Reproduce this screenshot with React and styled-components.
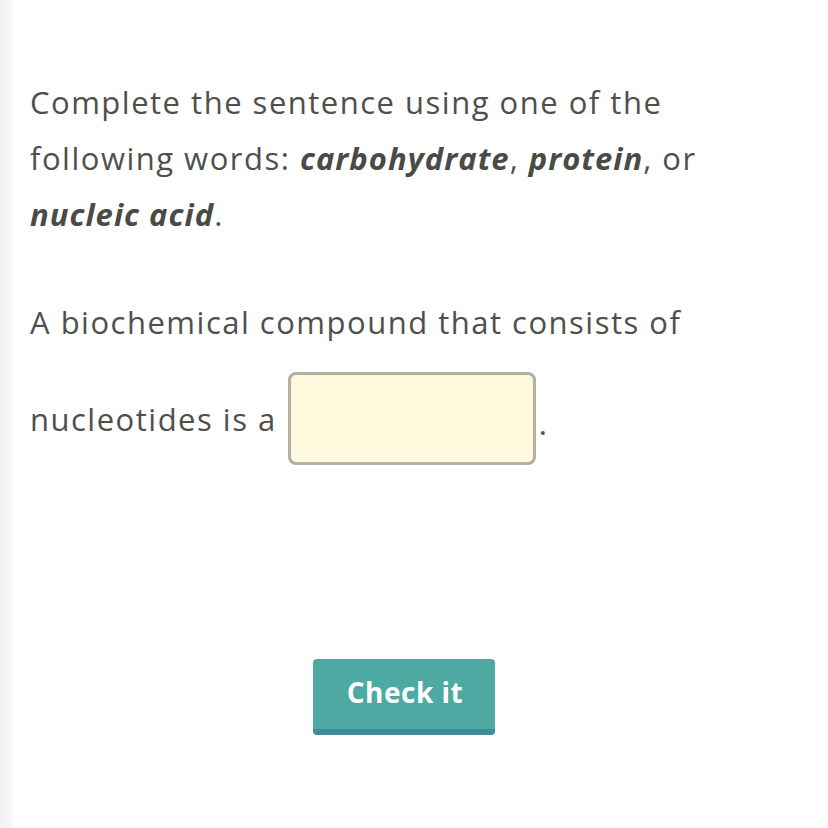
import React from 'react'
import styled, { createGlobalStyle } from 'styled-components'

const GlobalStyle = createGlobalStyle`
  html, body {
    margin: 0;
    padding: 0;
    background: #ffffff;
  }
`

const Page = styled.div`
  width: 828px;
  height: 828px;
  box-sizing: border-box;
  display: flex;
  flex-direction: column;
  background: linear-gradient(to right, #f1f1f1 0px, #f7f7f7 10px, #ffffff 16px);
  padding: 74px 20px 0 30px;
  font-family: 'Open Sans', Lato, sans-serif;
  color: #4f4f4d;
`

const Prompt = styled.p`
  margin: 0;
  font-size: 31px;
  line-height: 56px;
  letter-spacing: 1.5px;
  width: 720px;
`

const Term = styled.b`
  font-style: italic;
  font-weight: 700;
  color: #4a4a47;
  letter-spacing: 1px;
`

const Sentence = styled.div`
  margin-top: 52px;
  font-size: 31px;
  line-height: 56px;
  letter-spacing: 1.5px;
  width: 720px;
`

const BlankRow = styled.div`
  display: flex;
  align-items: center;
  margin-top: 22px;
`

const Blank = styled.input`
  width: 248px;
  height: 93px;
  box-sizing: border-box;
  margin: 0 3px 0 11px;
  background: #fef8dc;
  border: 3px solid #b3afa4;
  border-radius: 8px;
  outline: none;
`

const Period = styled.span`
  padding-top: 8px;
`

const ButtonRow = styled.div`
  display: flex;
  justify-content: center;
  margin-top: 194px;
  padding-right: 30px;
`

const CheckButton = styled.button`
  width: 182px;
  height: 76px;
  box-sizing: border-box;
  background: #4fa9a3;
  border: none;
  border-bottom: 6px solid #3f8b9c;
  border-radius: 4px;
  color: #ffffff;
  font-family: 'Open Sans', Lato, sans-serif;
  font-size: 28px;
  font-weight: 700;
  letter-spacing: 0.5px;
  padding: 0 0 4px 2px;
`

export default function App() {
  return (
    <>
      <GlobalStyle />
      <Page>
        <Prompt>
          Complete the sentence using one of the following words: <Term>carbohydrate</Term>, <Term>protein</Term>, or <Term>nucleic acid</Term>.
        </Prompt>
        <Sentence>
          A biochemical compound that consists of
          <BlankRow>
            <span>nucleotides is a</span>
            <Blank type="text" aria-label="answer" />
            <Period>.</Period>
          </BlankRow>
        </Sentence>
        <ButtonRow>
          <CheckButton>Check it</CheckButton>
        </ButtonRow>
      </Page>
    </>
  )
}
